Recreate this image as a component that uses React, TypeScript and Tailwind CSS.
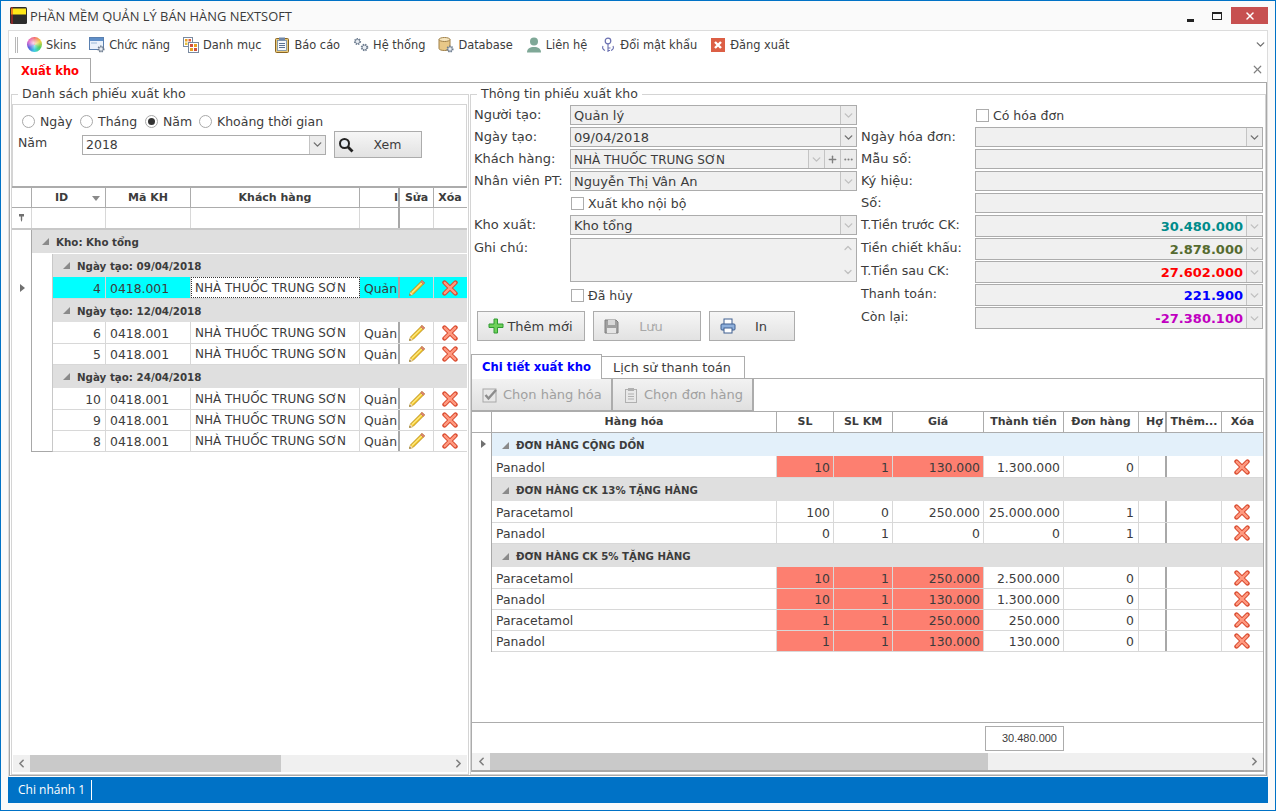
import type { ReactNode } from "react";
import { ChevronDown, ChevronLeft, ChevronRight, ChevronUp, MoreHorizontal, Plus, X } from "lucide-react";

const Gear = ({ x, y, r = 2.4 }: { x: number; y: number; r?: number }) => (
  <g>
    <circle cx={x} cy={y} r={r + 0.6} fill="none" stroke="#6f7f92" strokeWidth="1.6" strokeDasharray="1.3 1.1" />
    <circle cx={x} cy={y} r={r} fill="#e8edf3" stroke="#5f6f82" strokeWidth="0.8" />
  </g>
);

const IconFunction = () => (
  <svg width="16" height="16" viewBox="0 0 16 16">
    <rect x="0.5" y="0.5" width="14" height="12" fill="#eaf2fb" stroke="#5a80b0" />
    <rect x="1" y="1" width="13" height="3" fill="#5f8fc8" />
    <rect x="2" y="5.5" width="6" height="1" fill="#9ab7d8" />
    <Gear x={12} y={12} r={2.2} />
  </svg>
);

const IconCategory = () => (
  <svg width="16" height="16" viewBox="0 0 16 16">
    <rect x="0.5" y="0.5" width="9" height="9" fill="#fff" stroke="#7a8aa0" />
    <rect x="5.5" y="5.5" width="10" height="10" fill="#fff" stroke="#7a8aa0" />
    <rect x="2" y="2" width="2.5" height="2.5" fill="#e8a020" />
    <rect x="5.5" y="2" width="2.5" height="2.5" fill="#e06040" />
    <rect x="2" y="5.5" width="2.5" height="2.5" fill="#e8c040" />
    <rect x="7" y="7" width="3" height="3" fill="#d05040" />
    <rect x="11" y="7" width="3" height="3" fill="#e8a020" />
    <rect x="7" y="11" width="3" height="3" fill="#e8a020" />
    <rect x="11" y="11" width="3" height="3" fill="#d05040" />
  </svg>
);

const IconReport = () => (
  <svg width="16" height="16" viewBox="0 0 16 16">
    <rect x="1.5" y="1.5" width="13" height="14" rx="1" fill="#e8c878" stroke="#8a6420" />
    <rect x="3.5" y="3.5" width="9" height="10" fill="#f6f8fc" stroke="#6080a8" strokeWidth="0.7" />
    <rect x="5" y="0.5" width="6" height="3" fill="#6f86a8" />
    <path d="M5 6.5h6M5 8.5h6M5 10.5h6" stroke="#5a7090" strokeWidth="1" />
  </svg>
);

const IconSystem = () => (
  <svg width="16" height="16" viewBox="0 0 16 16">
    <Gear x={4.5} y={4.5} r={2.2} />
    <Gear x={11.5} y={10.5} r={2.4} />
  </svg>
);

const IconDatabase = () => (
  <svg width="16" height="16" viewBox="0 0 16 16">
    <path d="M1 2.5v9c0 1 2 2 5.5 2s5.5-1 5.5-2v-9z" fill="#e8c888" stroke="#a08048" />
    <ellipse cx="6.5" cy="2.5" rx="5.5" ry="2" fill="#f6e6c0" stroke="#a08048" />
    <Gear x={12} y={12} r={2.2} />
  </svg>
);

const IconContact = () => (
  <svg width="16" height="16" viewBox="0 0 16 16">
    <circle cx="8" cy="4.5" r="4" fill="#7fa897" />
    <path d="M1 15.5c0-4 3-5.5 7-5.5s7 1.5 7 5.5z" fill="#7fa897" />
  </svg>
);

const IconKey = () => (
  <svg width="16" height="16" viewBox="0 0 16 16">
    <circle cx="8" cy="4" r="2.8" fill="#fff" stroke="#6a70b0" strokeWidth="1.2" />
    <path d="M8 7v8M8 11h2.5M8 13.5h2M3 9c-1 2 0 3.5 2 4.5M13 9c1 2 0 3.5-2 4.5" fill="none" stroke="#6a70b0" strokeWidth="1.1" />
  </svg>
);

const IconLogout = () => (
  <svg width="16" height="16" viewBox="0 0 16 16">
    <rect x="1" y="1" width="14" height="14" fill="#dc5f45" />
    <path d="M5 5l6 6M11 5l-6 6" stroke="#fff" strokeWidth="2.4" />
  </svg>
);

const Pencil = () => (
  <svg width="18" height="18" viewBox="0 0 18 18">
    <path d="M14 1.5l2.5 2.5L5 15.5 1.5 16.5 2.5 13z" fill="#f4c928" stroke="#b58a1a" strokeWidth="0.9" strokeLinejoin="round" />
    <path d="M4 13.5L15 2.8" stroke="#fde98a" strokeWidth="1.1" />
    <path d="M12.8 2.7l2.5 2.5 1.2-1.2L14 1.5z" fill="#e88a80" stroke="#b05a50" strokeWidth="0.6" />
    <path d="M2.5 13l-1 3.5L5 15.5z" fill="#f6dcb0" />
    <path d="M1.8 15l-.3 1.5 1.5-.4z" fill="#444" />
  </svg>
);

const RedX = () => (
  <svg width="16" height="16" viewBox="0 0 16 16">
    <path d="M2.5 2.5l11 11M13.5 2.5l-11 11" stroke="#d8482c" strokeWidth="4.4" strokeLinecap="round" />
    <path d="M2.8 2.8l10.4 10.4M13.2 2.8L2.8 13.2" stroke="#ff9a80" strokeWidth="2.4" strokeLinecap="round" />
  </svg>
);

const toolbarItems: { label: string; icon: ReactNode }[] = [
  {
    label: "Skins",
    icon: (
      <span className="block h-[15px] w-[15px] rounded-full bg-[radial-gradient(circle_at_45%_40%,#ffffffd0,transparent_55%),conic-gradient(#f05050,#f0d040,#50d060,#40d0e0,#5060e0,#e050c0,#f05050)]" />
    ),
  },
  { label: "Chức năng", icon: <IconFunction /> },
  { label: "Danh mục", icon: <IconCategory /> },
  { label: "Báo cáo", icon: <IconReport /> },
  { label: "Hệ thống", icon: <IconSystem /> },
  { label: "Database", icon: <IconDatabase /> },
  { label: "Liên hệ", icon: <IconContact /> },
  { label: "Đổi mật khẩu", icon: <IconKey /> },
  { label: "Đăng xuất", icon: <IconLogout /> },
];

const Radio = ({ label, checked, className }: { label: string; checked?: boolean; className: string }) => (
  <div className={`flex items-center gap-[5px] ${className}`}>
    <span className="flex h-[13px] w-[13px] items-center justify-center rounded-full border border-[#a8a8a8] bg-white">
      {checked && <span className="h-[7px] w-[7px] rounded-full bg-[#333]" />}
    </span>
    <span className="pt-px">{label}</span>
  </div>
);

const Check = ({ label, className }: { label: string; className: string }) => (
  <div className={`flex items-center gap-[4px] text-[12.5px] ${className}`}>
    <span className="h-[13px] w-[13px] border border-[#acacac] bg-white" />
    <span className="pt-[2px]">{label}</span>
  </div>
);

const ArrowBox = ({ dim, children }: { dim?: boolean; children?: ReactNode }) => (
  <span className={`flex h-full w-[16px] shrink-0 items-center justify-center border-l border-[#c4c4c4] bg-[#ececec] ${dim ? "text-[#c0c0c0]" : "text-[#707070]"}`}>
    {children ?? <ChevronDown size={13} strokeWidth={2.6} />}
  </span>
);

const Select = ({ value, dim, extra, upper }: { value?: string; dim?: boolean; extra?: ReactNode; upper?: boolean }) => (
  <div className="flex h-[20px] flex-1 items-center border border-[#acacac] bg-[#f0f0f0]">
    <span className={`flex-1 truncate pl-[3px] pt-px ${upper ? "text-[12px]" : ""}`}>{value}</span>
    <ArrowBox dim={dim} />
    {extra}
  </div>
);

const Plain = () => <div className="h-[20px] flex-1 border border-[#acacac] bg-[#f0f0f0]" />;

const Row = ({ label, width, children }: { label: string; width: "left" | "right"; children: ReactNode }) => (
  <div className="flex h-[20px] items-center">
    <span className={`shrink-0 pb-px ${width === "left" ? "w-[96px]" : "w-[114px]"}`}>{label}</span>
    {children}
  </div>
);

const Money = ({ label, value, color }: { label: string; value: string; color: string }) => (
  <div className="flex h-[22px] items-center">
    <span className="w-[114px] shrink-0 pb-[3px] text-[12.6px]">{label}</span>
    <div className="flex h-full flex-1 items-center border border-[#acacac] bg-[#f0f0f0]">
      <span className={`flex-1 pr-[3px] pt-px text-right text-[13px] font-bold ${color}`}>{value}</span>
      <ArrowBox dim />
    </div>
  </div>
);

const ActionButton = ({ icon, label, className, dim, pad = "pr-[6px]" }: { icon: ReactNode; label: string; className: string; dim?: boolean; pad?: string }) => (
  <div className={`flex h-[30px] items-center border border-[#acacac] bg-gradient-to-b from-[#f6f6f6] to-[#e2e2e2] pl-[10px] ${className}`}>
    <span className="w-[16px] shrink-0">{icon}</span>
    <span className={`flex-1 pt-px text-center ${pad} ${dim ? "text-[#a8a8a8]" : ""}`}>{label}</span>
  </div>
);

const Scrollbar = ({ thumb, lead }: { thumb: string; lead: string }) => (
  <div className="flex h-[17px] shrink-0 items-center bg-[#f0f0f0] text-[#808080]">
    <span className={`flex justify-center ${lead}`}>
      <ChevronLeft size={13} strokeWidth={3} />
    </span>
    <span className={`h-full bg-[#c9c9c9] ${thumb}`} />
    <span className="flex flex-1 justify-end pr-[2px]">
      <ChevronRight size={13} strokeWidth={3} />
    </span>
  </div>
);

const Caret = () => <span className="mr-[7px] h-0 w-0 border-b-[7px] border-l-[7px] border-b-[#8a8a8a] border-l-transparent" />;

const Pointer = () => <span className="block h-0 w-0 border-y-[4px] border-l-[5px] border-y-transparent border-l-[#707070]" />;

const headCell = "flex h-full items-center justify-center border-r border-[#acacac] text-[11px] font-bold";

const LeftGroup = ({ title, tall }: { title: string; tall?: boolean }) => (
  <div className={`flex items-center bg-[#dfdfdf] pl-[10px] text-[10.3px] font-bold ${tall ? "h-[24px] border-b border-white" : "h-[23px]"}`}>
    <Caret />
    {title}
  </div>
);

const LeftRow = ({ id, first, current }: { id: number; first?: boolean; current?: boolean }) => (
  <div className={`flex border-b border-[#d8d8d8] text-[12.4px] ${first ? "h-[22px] leading-[23px]" : "h-[21px] leading-[21px]"} ${current ? "bg-[#00ffff]" : "bg-white"}`}>
    <span className="w-[53px] border-r border-[#d8d8d8] pr-[4px] text-right">{id}</span>
    <span className="w-[85px] border-r border-[#d8d8d8] pl-[4px]">0418.001</span>
    <span className={`w-[169px] border-r border-[#d8d8d8] pl-[4px] text-[12px] ${current ? "bg-white outline-1 -outline-offset-1 outline-dotted outline-[#333]" : ""}`}>NHÀ THUỐC TRUNG SƠN</span>
    <span className="w-[40px] overflow-hidden border-r-2 border-[#a8a8a8] pl-[4px] whitespace-nowrap">Quản lý</span>
    <span className="flex w-[34px] items-center justify-center border-r border-[#d8d8d8]">
      <Pencil />
    </span>
    <span className="flex w-[32px] items-center justify-center">
      <RedX />
    </span>
  </div>
);

const leftGroups = [
  { title: "Ngày tạo: 09/04/2018", ids: [4] },
  { title: "Ngày tạo: 12/04/2018", ids: [6, 5] },
  { title: "Ngày tạo: 24/04/2018", ids: [10, 9, 8] },
];

const LeftGrid = () => (
  <div className="mr-px border-t-2 border-[#acacac]">
    <div className="flex h-[20px] border-b border-[#acacac]">
      <span className={`w-[20px] ${headCell}`} />
      <span className={`relative w-[74px] ${headCell}`}>
        <span className="pr-[14px]">ID</span>
        <span className="absolute right-[5px] top-[8px] h-0 w-0 border-x-[4px] border-t-[5px] border-x-transparent border-t-[#8a8a8a]" />
      </span>
      <span className={`w-[85px] ${headCell}`}>Mã KH</span>
      <span className={`w-[169px] ${headCell}`}>Khách hàng</span>
      <span className="flex h-full w-[40px] items-center justify-end border-r-2 border-[#a8a8a8] text-[11px] font-bold">I</span>
      <span className={`w-[34px] ${headCell}`}>Sửa</span>
      <span className="flex w-[32px] items-center justify-center text-[11px] font-bold">Xóa</span>
    </div>
    <div className="flex h-[22px] border-b-2 border-[#c8c8c8]">
      <span className="flex w-[20px] items-center justify-center border-r border-[#d8d8d8]">
        <svg width="5" height="8" viewBox="0 0 5 8">
          <path d="M0 0h5v2.500H3.200V6L2.500 8 1.800 6V2.500H0z" fill="#707070" />
        </svg>
      </span>
      <span className="w-[74px] border-r border-[#d8d8d8]" />
      <span className="w-[85px] border-r border-[#d8d8d8]" />
      <span className="w-[169px] border-r border-[#d8d8d8]" />
      <span className="w-[40px] border-r-2 border-[#a8a8a8]" />
      <span className="w-[34px] border-r border-[#d8d8d8]" />
    </div>
    <div className="flex">
      <div className="relative w-[20px] shrink-0 border-r border-[#a8a8a8]">
        <span className="absolute left-[8px] top-[54px]">
          <Pointer />
        </span>
      </div>
      <div className="flex-1">
        <LeftGroup title="Kho: Kho tổng" tall />
        <div className="flex">
          <div className="w-[21px] shrink-0 border-r border-b border-r-[#c8c8c8] border-b-[#a8a8a8]" />
          <div className="flex-1">
            {leftGroups.map((g) => (
              <div key={g.title}>
                <LeftGroup title={g.title} />
                {g.ids.map((id, i) => (
                  <LeftRow key={id} id={id} first={i === 0} current={id === 4} />
                ))}
              </div>
            ))}
          </div>
        </div>
      </div>
    </div>
  </div>
);

const detailGroups = [
  {
    title: "ĐƠN HÀNG CỘNG DỒN",
    head: "bg-[#e3f0fa]",
    rows: [{ name: "Panadol", sl: 10, km: 1, gia: "130.000", tien: "1.300.000", dh: 0, hot: true }],
  },
  {
    title: "ĐƠN HÀNG CK 13% TẶNG HÀNG",
    head: "bg-[#dfdfdf]",
    rows: [
      { name: "Paracetamol", sl: 100, km: 0, gia: "250.000", tien: "25.000.000", dh: 1, hot: false },
      { name: "Panadol", sl: 0, km: 1, gia: "0", tien: "0", dh: 1, hot: false },
    ],
  },
  {
    title: "ĐƠN HÀNG CK 5% TẶNG HÀNG",
    head: "bg-[#dfdfdf]",
    rows: [
      { name: "Paracetamol", sl: 10, km: 1, gia: "250.000", tien: "2.500.000", dh: 0, hot: true },
      { name: "Panadol", sl: 10, km: 1, gia: "130.000", tien: "1.300.000", dh: 0, hot: true },
      { name: "Paracetamol", sl: 1, km: 1, gia: "250.000", tien: "250.000", dh: 0, hot: true },
      { name: "Panadol", sl: 1, km: 1, gia: "130.000", tien: "130.000", dh: 0, hot: true },
    ],
  },
];

const DetailGrid = () => (
  <div className="flex min-h-0 flex-1 flex-col">
    <div className="flex h-[22px] shrink-0 border-y border-[#acacac]">
      <span className={`w-[20px] ${headCell}`} />
      <span className={`w-[285px] ${headCell}`}>Hàng hóa</span>
      <span className={`w-[57px] ${headCell}`}>SL</span>
      <span className={`w-[59px] ${headCell}`}>SL KM</span>
      <span className={`w-[91px] ${headCell}`}>Giá</span>
      <span className={`w-[80px] ${headCell}`}>Thành tiền</span>
      <span className={`w-[75px] ${headCell}`}>Đơn hàng</span>
      <span className="flex h-full w-[28px] items-center overflow-hidden border-r-2 border-[#a8a8a8] pl-[7px] text-[11px] font-bold whitespace-nowrap">Hợ</span>
      <span className={`w-[55px] ${headCell}`}>Thêm...</span>
      <span className="flex w-[41px] items-center justify-center text-[11px] font-bold">Xóa</span>
    </div>
    <div className="relative flex-1">
      <span className="absolute left-[9px] top-[7px]">
        <Pointer />
      </span>
      <div className="ml-[19px] border-l border-[#a8a8a8]">
        {detailGroups.map((g) => (
          <div key={g.title}>
            <div className={`flex h-[23px] items-center pl-[10px] pt-px text-[10.2px] font-bold ${g.head}`}>
              <Caret />
              <span className="pt-px">{g.title}</span>
            </div>
            {g.rows.map((r, i) => (
              <div key={i} className={`flex border-b border-[#d8d8d8] text-[12.4px] ${i === 0 ? "h-[22px] leading-[23px]" : "h-[21px] leading-[21px]"}`}>
                <span className="w-[285px] border-r border-[#d8d8d8] pl-[4px]">{r.name}</span>
                <span className={`w-[57px] border-r border-[#d8d8d8] pr-[3px] text-right ${r.hot ? "bg-[#fd7f70]" : ""}`}>{r.sl}</span>
                <span className={`w-[59px] border-r border-[#d8d8d8] pr-[3px] text-right ${r.hot ? "bg-[#fd7f70]" : ""}`}>{r.km}</span>
                <span className={`w-[91px] border-r border-[#d8d8d8] pr-[3px] text-right ${r.hot ? "bg-[#fd7f70]" : ""}`}>{r.gia}</span>
                <span className="w-[80px] border-r border-[#d8d8d8] pr-[3px] text-right">{r.tien}</span>
                <span className="w-[75px] border-r border-[#d8d8d8] pr-[4px] text-right">{r.dh}</span>
                <span className="w-[28px] border-r-2 border-[#a8a8a8]" />
                <span className="w-[55px] border-r border-[#d8d8d8]" />
                <span className="flex w-[40px] items-center justify-center">
                  <RedX />
                </span>
              </div>
            ))}
          </div>
        ))}
      </div>
    </div>
    <div className="flex h-[31px] shrink-0 items-center border-t border-[#acacac]">
      <span className="ml-[513px] flex h-[25px] w-[79px] items-center justify-end border border-[#acacac] pr-[6px] font-['Liberation_Sans',sans-serif] text-[11px]">30.480.000</span>
    </div>
  </div>
);

export default function App() {
  return (
    <div className="flex h-[811px] w-[1276px] flex-col overflow-hidden border border-[#0072c6] bg-[#fafafa] font-['DejaVu_Sans',sans-serif] text-[12px] leading-[20px] text-[#3c3c3c]">
      {/* title bar */}
      <div className="flex h-[29px] shrink-0 items-center pl-[9px]">
        <svg width="17" height="17" viewBox="0 0 17 17">
          <rect width="17" height="17" rx="1.5" fill="#2c2c2c" />
          <rect x="1" y="1.5" width="15" height="6" fill="#ffe818" />
          <rect x="1.5" y="0" width="1" height="17" fill="#e02020" />
        </svg>
        <span className="ml-[3px] font-['Open_Sans',sans-serif] text-[12.9px] text-[#3a3a3a]">PHẦN MỀM QUẢN LÝ BÁN HÀNG NEXTSOFT</span>
        <span className="ml-auto mt-[9px] h-[3px] w-[7px] bg-[#222]" />
        <span className="ml-[18px] h-[8px] w-[10px] border border-t-[2px] border-[#222]" />
        <span className="ml-[9px] mr-[7px] flex h-[17px] w-[37px] items-center justify-center bg-[#c75050] text-white">
          <X size={12} strokeWidth={3} />
        </span>
      </div>

      {/* main frame */}
      <div className="mx-[7px] flex min-h-0 flex-1 flex-col border-x border-[#dcdcdc] bg-white">
        <div className="flex h-[28px] shrink-0 items-center border-t border-[#dcdcdc] pl-[6px] text-[11.4px]">
          <span className="mr-[8px] h-[16px] w-[3px] border-x border-[#b8b8b8]" />
          <div className="flex gap-[13px]">
            {toolbarItems.map((t) => (
              <div key={t.label} className="flex items-center gap-1">
                <span className="flex w-4 justify-center">{t.icon}</span>
                <span>{t.label}</span>
              </div>
            ))}
          </div>
          <ChevronDown size={13} strokeWidth={2.5} className="ml-auto text-[#707070]" />
        </div>

        <div className="flex h-[24px] shrink-0 items-start">
          <div className="z-10 flex h-[25px] w-[82px] items-center justify-center border border-b-0 border-[#a8a8a8] bg-white text-[11.5px] font-bold text-[#ff0000]">Xuất kho</div>
          <X size={13} strokeWidth={2.2} className="ml-auto mr-[3px] mt-[5px] text-[#808080]" />
        </div>

        {/* content */}
        <div className="mb-px flex min-h-0 flex-1 border border-[#a8a8a8] bg-white">
          <fieldset className="ml-px mt-[3px] flex w-[458px] shrink-0 flex-col border border-[#d4d4d4]">
            <legend className="ml-[6px] px-[4px] text-[12.5px] leading-[16px]">Danh sách phiếu xuất kho</legend>
            <div className="flex h-full flex-col">
              <div className="mr-px mt-[2px] h-[82px] shrink-0 border-x border-t border-[#d4d4d4] pl-[9px] text-[12.5px]">
                <div className="mt-[6px] flex h-[20px] items-center">
                  <Radio label="Ngày" checked={false} className="w-[58px]" />
                  <Radio label="Tháng" className="w-[65px]" />
                  <Radio label="Năm" checked className="w-[54px]" />
                  <Radio label="Khoảng thời gian" className="" />
                </div>
                <div className="-ml-[4px] flex h-[27px] items-center">
                  <span className="w-[64px] pb-[3px]">Năm</span>
                  <div className="flex h-[20px] w-[244px] items-center border border-[#acacac] bg-white">
                    <span className="flex-1 pl-[3px]">2018</span>
                    <ArrowBox />
                  </div>
                  <ActionButton className="ml-[8px] !h-[27px] w-[88px] !pl-[3px]" pad="pr-0" label="Xem" icon={
                    <svg width="16" height="16" viewBox="0 0 16 16">
                      <circle cx="6.5" cy="6.5" r="4.5" fill="#e8eef4" stroke="#222" strokeWidth="2" />
                      <path d="M10 10l4.500 4.500" stroke="#222" strokeWidth="2.8" />
                    </svg>
                  } />
                </div>
              </div>
              <LeftGrid />
              <div className="flex-1" />
              <div className="mx-px">
                <Scrollbar lead="w-[17px]" thumb="w-[251px]" />
              </div>
              <div className="h-[2px] shrink-0" />
            </div>
          </fieldset>

          <fieldset className="ml-px mt-[3px] flex w-[796px] shrink-0 flex-col border border-[#d4d4d4]">
            <legend className="ml-[6px] px-[4px] text-[12.5px] leading-[16px]">Thông tin phiếu xuất kho</legend>
            <div className="flex h-full flex-col">
              <div className="flex h-[252px] shrink-0 pl-[3px] pt-[3px] text-[13px]">
                <div className="w-[387px] shrink-0 pr-[4px]">
                  <div className="flex flex-col gap-[2px]">
                    <Row label="Người tạo:" width="left"><Select value="Quản lý" dim /></Row>
                    <Row label="Ngày tạo:" width="left"><Select value="09/04/2018" /></Row>
                    <Row label="Khách hàng:" width="left">
                      <Select value="NHÀ THUỐC TRUNG SƠN" upper dim extra={
                        <>
                          <ArrowBox><Plus size={11} strokeWidth={3} className="text-[#808080]" /></ArrowBox>
                          <ArrowBox><MoreHorizontal size={11} strokeWidth={2.5} className="text-[#808080]" /></ArrowBox>
                        </>
                      } />
                    </Row>
                    <Row label="Nhân viên PT:" width="left"><Select value="Nguyễn Thị Vân An" dim /></Row>
                    <Row label="" width="left"><Check label="Xuất kho nội bộ" className="pl-[1px]" /></Row>
                    <Row label="Kho xuất:" width="left"><Select value="Kho tổng" dim /></Row>
                  </div>
                  <div className="mt-[3px] flex h-[44px]">
                    <span className="w-[96px] shrink-0 leading-[20px]">Ghi chú:</span>
                    <div className="flex flex-1 flex-col items-end justify-between border border-[#acacac] bg-[#f0f0f0] px-[2px] py-[3px] text-[#c0c0c0]">
                      <ChevronUp size={12} strokeWidth={2.5} />
                      <ChevronDown size={12} strokeWidth={2.5} />
                    </div>
                  </div>
                  <div className="mt-[3px]">
                    <Row label="" width="left"><Check label="Đã hủy" className="pl-[1px]" /></Row>
                  </div>
                  <div className="ml-[3px] mt-[6px] flex gap-[8px]">
                    <ActionButton className="w-[108px] shrink-0" pad="pr-[8px]" label="Thêm mới" icon={
                      <svg width="16" height="16" viewBox="0 0 16 16">
                        <path d="M6 1h3.500v5H15v3.500H9.500V15H6V9.500H1V6h5z" fill="#6fd15a" stroke="#2f9a30" />
                      </svg>
                    } />
                    <ActionButton className="w-[108px] shrink-0" dim pad="pr-[18px]" label="Lưu" icon={
                      <svg width="15" height="15" viewBox="0 0 15 15">
                        <path d="M1 1h11l2 2v11H1z" fill="#a0a0a0" stroke="#808080" />
                        <rect x="4" y="1" width="7" height="5" fill="#d8d8d8" />
                        <rect x="3" y="9" width="9" height="5" fill="#e4e4e4" />
                      </svg>
                    } />
                    <ActionButton className="w-[86px] shrink-0" pad="pr-[8px]" label="In" icon={
                      <svg width="16" height="16" viewBox="0 0 16 16">
                        <rect x="4" y="1" width="8" height="6" fill="#fff" stroke="#3f5f90" />
                        <rect x="1" y="6" width="14" height="6" rx="1" fill="#8fb0dc" stroke="#3f5f90" />
                        <rect x="4" y="10" width="8" height="5" fill="#fff" stroke="#3f5f90" />
                      </svg>
                    } />
                  </div>
                </div>
                <div className="w-[402px] shrink-0">
                  <div className="flex h-[20px] items-center pl-[114px]">
                    <Check label="Có hóa đơn" className="pl-[1px]" />
                  </div>
                  <div className="mt-[2px] flex flex-col gap-[2px]">
                    <Row label="Ngày hóa đơn:" width="right"><Select /></Row>
                    <Row label="Mẫu số:" width="right"><Plain /></Row>
                    <Row label="Ký hiệu:" width="right"><Plain /></Row>
                    <Row label="Số:" width="right"><Plain /></Row>
                  </div>
                  <div className="mt-[2px] flex flex-col gap-px">
                    <Money label="T.Tiền trước CK:" value="30.480.000" color="text-[#008b8b]" />
                    <Money label="Tiền chiết khấu:" value="2.878.000" color="text-[#556b2f]" />
                    <Money label="T.Tiền sau CK:" value="27.602.000" color="text-[#ff0000]" />
                    <Money label="Thanh toán:" value="221.900" color="text-[#0000ff]" />
                    <Money label="Còn lại:" value="-27.380.100" color="text-[#c000c0]" />
                  </div>
                </div>
              </div>

              <div className="flex h-[24px] shrink-0 items-end">
                <div className="z-10 -mb-px flex h-[25px] w-[131px] items-center justify-center border border-b-0 border-[#acacac] bg-white text-[11.6px] font-bold text-[#0000ff]">Chi tiết xuất kho</div>
                <div className="flex h-[22px] w-[143px] items-center justify-center border border-b-0 border-l-0 border-[#acacac] bg-white pt-px pr-[2px] text-[12.7px]">Lịch sử thanh toán</div>
              </div>
              <div className="flex min-h-0 w-[793px] flex-1 flex-col border-x border-t border-[#acacac]">
                <div className="flex h-[32px] shrink-0 text-[13px] text-[#a0a0a0]">
                  <div className="flex w-[141px] items-center gap-[5px] border-r-2 border-b border-[#acacac] bg-gradient-to-b from-[#f2f2f2] to-[#e0e0e0] pl-[10px]">
                    <svg width="16" height="16" viewBox="0 0 16 16">
                      <rect x="1" y="2" width="13" height="13" fill="#e8e8e8" stroke="#a8a8a8" />
                      <path d="M3.500 8l3 3.500L14 3" fill="none" stroke="#8c8c8c" strokeWidth="2.4" />
                    </svg>
                    <span className="pt-px">Chọn hàng hóa</span>
                  </div>
                  <div className="flex w-[141px] items-center gap-[5px] border-r-2 border-b border-[#acacac] bg-gradient-to-b from-[#f2f2f2] to-[#e0e0e0] pl-[10px]">
                    <svg width="16" height="16" viewBox="0 0 16 16">
                      <rect x="2.5" y="2.5" width="11" height="13" fill="#e8e8e8" stroke="#b0b0b0" />
                      <rect x="5" y="1" width="6" height="3" fill="#b0b0b0" />
                      <path d="M5 7h6M5 9.500h6M5 12h6" stroke="#b0b0b0" />
                    </svg>
                    <span className="pt-px">Chọn đơn hàng</span>
                  </div>
                </div>
                <DetailGrid />
                <Scrollbar lead="w-[18px]" thumb="w-[498px]" />
                <div className="h-[2px] shrink-0 bg-[#a8a8a8]" />
              </div>
              <div className="h-[2px] shrink-0" />
            </div>
          </fieldset>
        </div>
      </div>

      {/* status bar */}
      <div className="mx-[7px] flex h-[26px] shrink-0 items-center bg-[#0072c6] text-white">
        <span className="h-[20px] w-[84px] border-r border-white pl-[10px] font-['Open_Sans',sans-serif] leading-[20px] whitespace-nowrap">Chi nhánh 1</span>
      </div>
      <div className="h-[7px] shrink-0" />
    </div>
  );
}
